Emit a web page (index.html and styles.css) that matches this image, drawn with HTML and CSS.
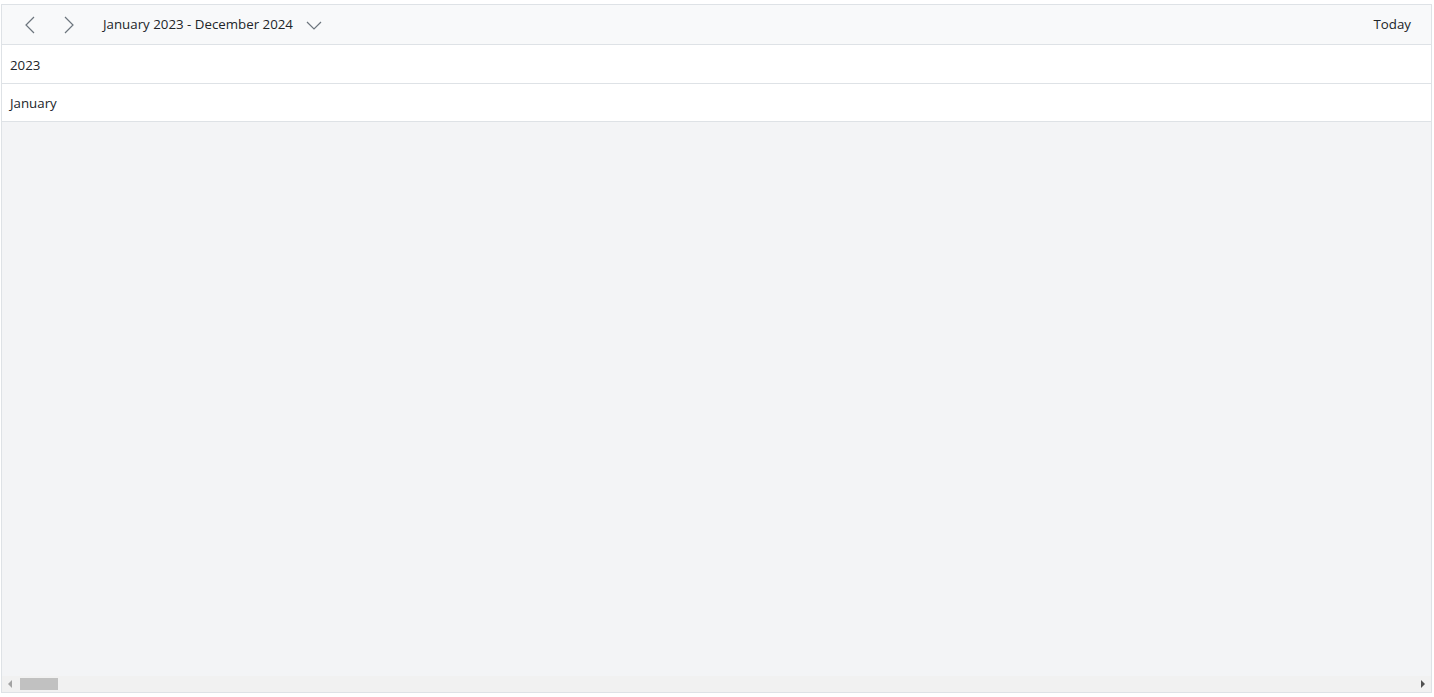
FILE: index.html
```html
<!DOCTYPE html>
<html lang="en">
<head>
  <meta charset="UTF-8">
  <title>Scheduler - Timeline Year</title>
  <link rel="stylesheet" href="styles.css">
</head>
<body>
  <div class="scheduler">
    <div class="toolbar">
      <div class="toolbar-left">
        <button class="nav-btn" title="Previous">
          <svg width="16" height="18" viewBox="0 0 16 18"><path d="M12 1 L4 9 L12 17" fill="none" stroke="#6c757d" stroke-width="1.2"/></svg>
        </button>
        <button class="nav-btn" title="Next">
          <svg width="16" height="18" viewBox="0 0 16 18"><path d="M4 1 L12 9 L4 17" fill="none" stroke="#6c757d" stroke-width="1.2"/></svg>
        </button>
        <button class="date-range">
          <span>January 2023 - December 2024</span>
          <svg width="16" height="10" viewBox="0 0 16 10"><path d="M1 2 L8 9 L15 2" fill="none" stroke="#6c757d" stroke-width="1.2"/></svg>
        </button>
      </div>
      <button class="today-btn">Today</button>
    </div>

    <div class="header-row">2023</div>
    <div class="header-row month">January</div>

    <div class="content"></div>

    <div class="scrollbar">
      <span class="arrow left"></span>
      <div class="track">
        <div class="thumb"></div>
      </div>
      <span class="arrow right"></span>
    </div>
  </div>
</body>
</html>
```

FILE: styles.css
```css
* {
  margin: 0;
  padding: 0;
  box-sizing: border-box;
  font-family: 'Open Sans', sans-serif;
}

body {
  background-color: #fff;
  padding: 4px 2px 4px 1px;
}

.scheduler {
  height: 689px;
  border: 1px solid #dee2e6;
  display: flex;
  flex-direction: column;
  color: #212529;
  font-size: 13.3px;
}

.toolbar {
  height: 40px;
  background-color: #f8f9fa;
  border-bottom: 1px solid #dee2e6;
  display: flex;
  align-items: center;
  justify-content: space-between;
  padding: 0 20px 0 8px;
}

.toolbar-left {
  display: flex;
  align-items: center;
}

button {
  background: none;
  border: none;
  cursor: pointer;
  color: #212529;
  font-size: 13.3px;
}

.nav-btn {
  width: 39px;
  height: 30px;
  display: flex;
  align-items: center;
  justify-content: center;
}

.date-range {
  display: flex;
  align-items: center;
  gap: 13px;
  margin-left: 15px;
  padding-bottom: 1px;
}

.date-range svg {
  margin-top: 2px;
}

.today-btn {
  padding: 0 0 1px 0;
}

.header-row {
  height: 39px;
  background-color: #fff;
  border-bottom: 1px solid #dee2e6;
  display: flex;
  align-items: center;
  padding: 1px 0 0 8px;
}

.header-row.month {
  height: 38px;
}

.content {
  flex: 1;
  background-color: #f3f4f6;
}

.scrollbar {
  height: 16px;
  background-color: #f1f1f1;
  display: flex;
  align-items: center;
}

.track {
  flex: 1;
  height: 100%;
  padding: 2px 0;
}

.thumb {
  width: 38px;
  height: 12px;
  margin-left: 2px;
  background-color: #c1c1c1;
}

.arrow {
  width: 16px;
  height: 16px;
  display: flex;
  align-items: center;
  justify-content: center;
}

.arrow::before {
  content: "";
  border-top: 4px solid transparent;
  border-bottom: 4px solid transparent;
}

.arrow.left::before {
  border-right: 4px solid #a3a3a3;
}

.arrow.right::before {
  border-left: 4px solid #505050;
}
```
